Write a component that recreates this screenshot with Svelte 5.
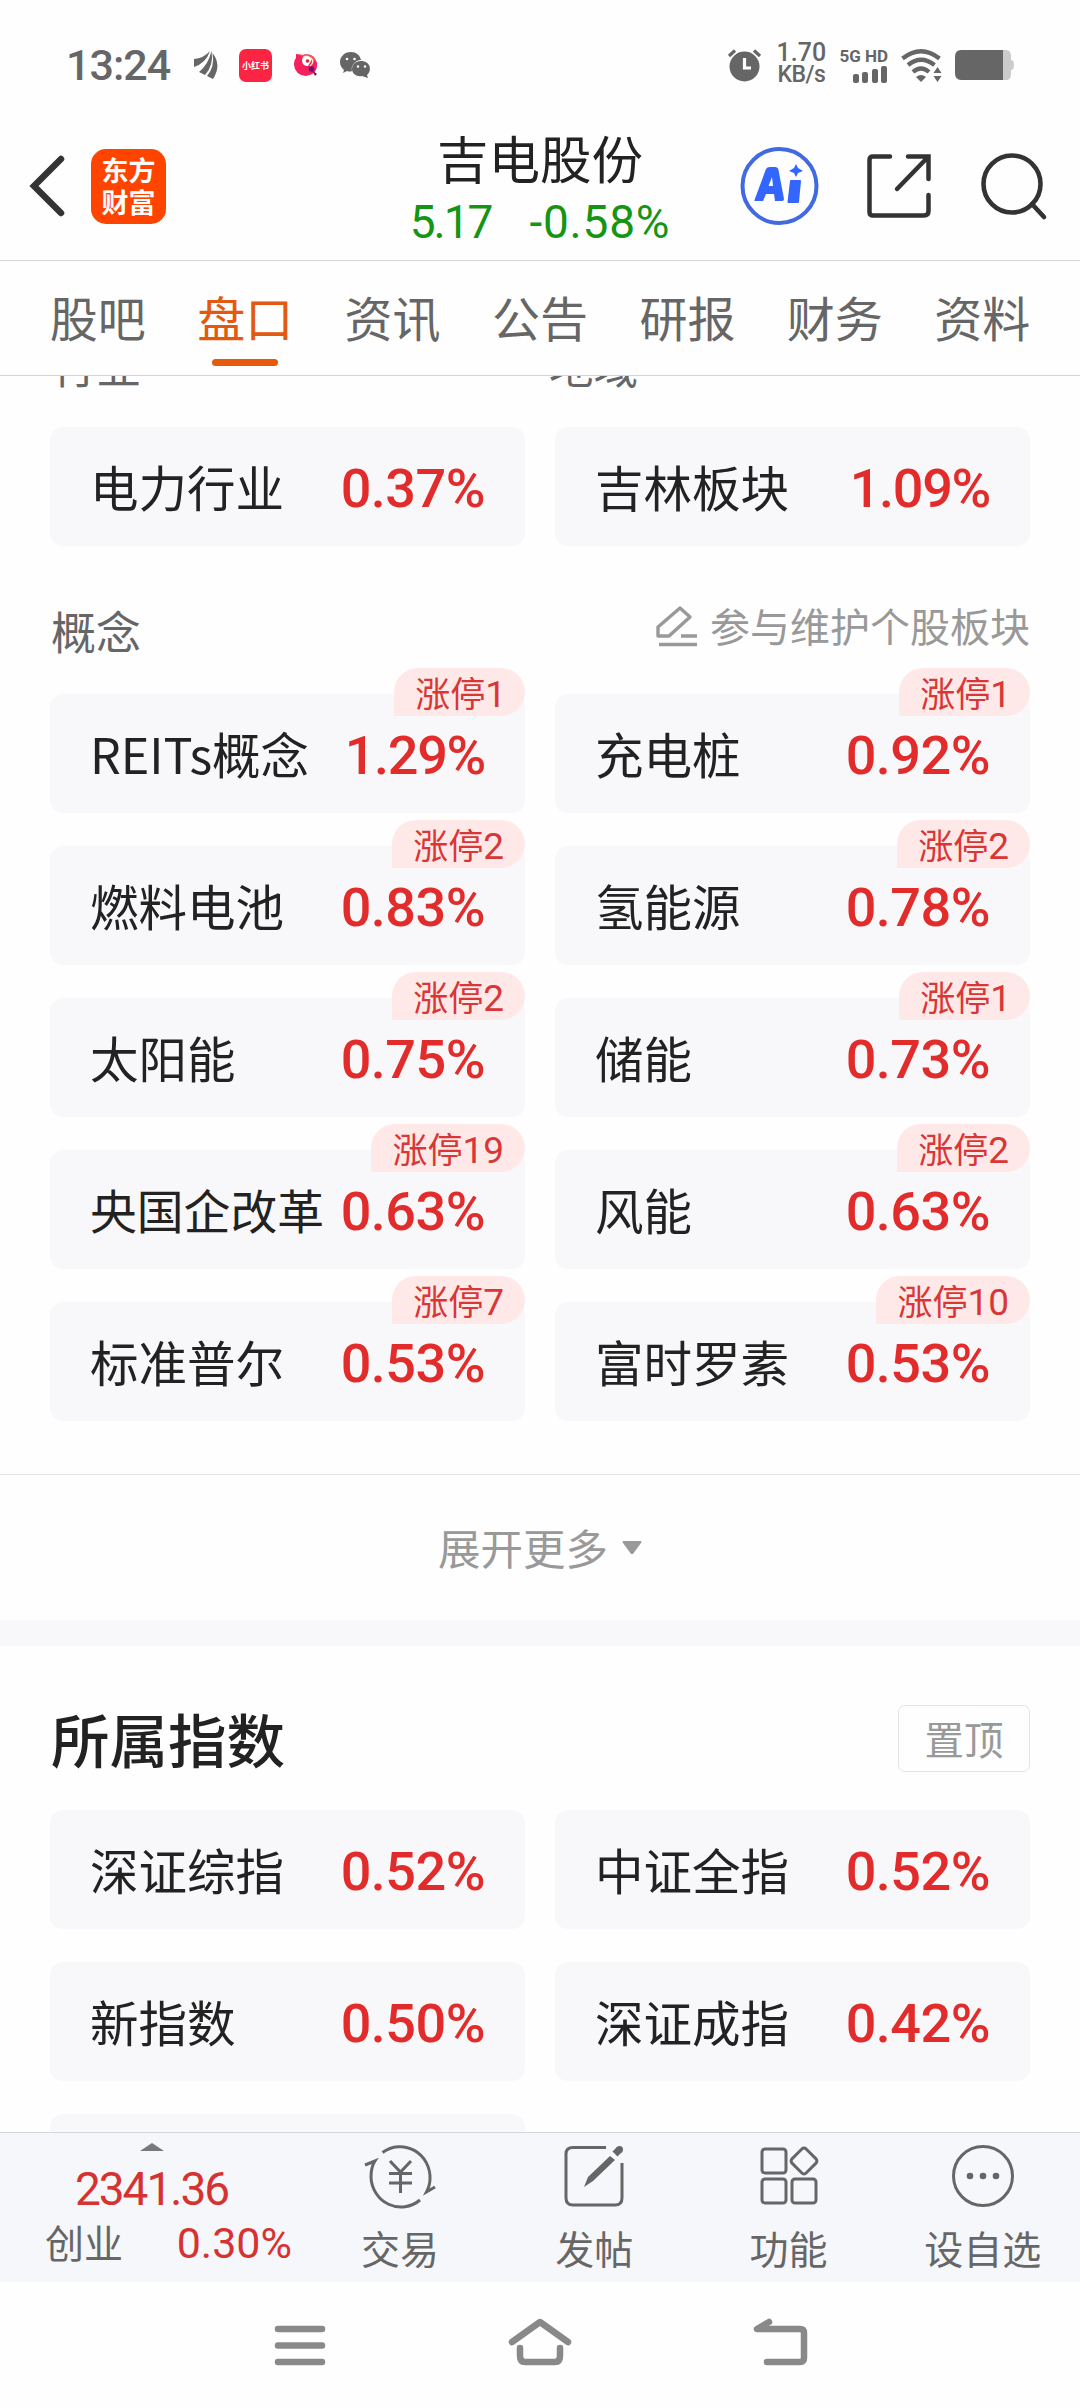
<script lang="ts">
    type Item = { name: string; change: string; limit?: number };

    const tabs = ['股吧', '盘口', '资讯', '公告', '研报', '财务', '资料'];
    let active = '盘口';

    const top: Item[] = [
        { name: '电力行业', change: '0.37%' },
        { name: '吉林板块', change: '1.09%' },
    ];
    const concepts: Item[] = [
        { name: 'REITs概念', change: '1.29%', limit: 1 },
        { name: '充电桩', change: '0.92%', limit: 1 },
        { name: '燃料电池', change: '0.83%', limit: 2 },
        { name: '氢能源', change: '0.78%', limit: 2 },
        { name: '太阳能', change: '0.75%', limit: 2 },
        { name: '储能', change: '0.73%', limit: 1 },
        { name: '央国企改革', change: '0.63%', limit: 19 },
        { name: '风能', change: '0.63%', limit: 2 },
        { name: '标准普尔', change: '0.53%', limit: 7 },
        { name: '富时罗素', change: '0.53%', limit: 10 },
    ];
    const indexes: Item[] = [
        { name: '深证综指', change: '0.52%' },
        { name: '中证全指', change: '0.52%' },
        { name: '新指数', change: '0.50%' },
        { name: '深证成指', change: '0.42%' },
        { name: '', change: '' },
    ];
</script>

{#snippet cards(items: Item[])}
    <div class="cards">
        {#each items as item}
            <div class="card">
                <span class="name" class:long={item.name.length === 5}>{item.name}</span>
                <span class="change" class:one={item.change[0] === '1'}>{item.change}</span>
                {#if item.limit}
                    <span class="badge">涨停<b class:one={item.limit === 1}>{item.limit}</b></span>
                {/if}
            </div>
        {/each}
    </div>
{/snippet}

<div class="screen">
    <div class="status">
        <span class="time">13:24</span>
        <svg class="paper" width="24" height="28" viewBox="0 0 24 28" fill="#666">
            <path d="M0 8Q10 7 16 0Q12 12 0 16Z" />
            <path d="M5 21Q14 14 17.500 0Q20 14 11 24Z" />
            <path d="M13 25Q21 16 18.500 2Q28 14 19 28Z" />
        </svg>
        <span class="xhs">小红书</span>
        <svg class="bird" width="24" height="24" viewBox="0 0 24 24">
            <path d="M2 1L8 2Q20-1 23 10Q24 21 12 23Q1 22 0 12Q0 7 2 5Z" fill="#f5205c" />
            <path d="M3 1L9 2Q18 0 22 8L12 5Z" fill="#e8663b" />
            <path d="M8 7Q9 2 14 3Q18 4 17 8L14 13Q8 13 8 7Z" fill="#fff" />
            <circle cx="13.500" cy="8" r="1.800" fill="#d3263d" />
            <path d="M17 5Q21 9 16 13" fill="none" stroke="#ffe0d8" stroke-width="1.500" />
            <circle cx="17.500" cy="16" r="2.800" fill="#70136b" />
            <path d="M18 17L23 21L21 23Z" fill="#70136b" />
        </svg>
        <svg class="wechat" width="31" height="27" viewBox="0 0 31 27">
            <path d="M11 0C4 0 0 5 0 10C0 14 2 16 4 18L3 21L7 19Q10 20 12 19A10 9 0 0 1 21 8C20 3 16 0 11 0Z" fill="#666" />
            <path d="M21 9C15 9 12 13 12 17C12 22 17 25 22 24L28 26L27 23C32 19 31 9 21 9Z" fill="#666" />
            <g fill="#fff">
                <circle cx="7" cy="7" r="1.3" /><circle cx="14.5" cy="7" r="1.3" />
                <circle cx="18" cy="14.5" r="1.2" /><circle cx="25" cy="14.5" r="1.2" />
            </g>
        </svg>
        <div class="spacer"></div>
        <svg class="alarm" width="33" height="33" viewBox="0 0 33 33">
            <circle cx="16.5" cy="17.5" r="15" fill="#666" />
            <path d="M1 7L7 1.5M32 7L26 1.5" stroke="#666" stroke-width="3.2" />
            <path d="M16.500 9V19H23" fill="none" stroke="#fff" stroke-width="3.2" />
        </svg>
        <div class="speed"><span>1.70</span><span class="unit">KB/s</span></div>
        <div class="signal">
            <span>5G HD</span>
            <svg width="36" height="17" viewBox="0 0 36 17" fill="#666">
                <rect x="1" y="8" width="6" height="9" rx="2" />
                <rect x="10" y="6" width="6" height="11" rx="2" />
                <rect x="20" y="3" width="6" height="14" rx="2" />
                <rect x="29" y="0" width="6" height="17" rx="2" />
            </svg>
        </div>
        <svg class="wifi" width="41" height="33" viewBox="0 0 41 33">
            <g fill="none" stroke="#666" stroke-width="4.2">
                <path d="M1.5 9.5Q20-5 38.500 9.500" />
                <path d="M7 16Q20 5.500 33.500 16" />
                <path d="M12 23Q20 16 28 23" />
            </g>
            <path d="M15 28Q20 24 25 28L20 33Z" fill="#666" />
            <path d="M32.500 24L36.500 18L40.500 24ZM32.500 27L36.500 33L40.500 27Z" fill="#666" />
        </svg>
        <svg class="battery" width="59" height="30" viewBox="0 0 59 30">
            <path d="M48 0H51Q56 0 56 6V10Q59 10 59 15T56 20V24Q56 30 51 30H48Z" fill="#ccc" />
            <path d="M48 0V30H6Q0 30 0 23V7Q0 0 6 0Z" fill="#666" />
        </svg>
    </div>

    <header>
        <svg class="back" width="36" height="62" viewBox="0 0 36 62">
            <path d="M32 4L5 31L32 58" fill="none" stroke="#333" stroke-width="6.500" stroke-linecap="round" />
        </svg>
        <div class="logo"><span>东方</span><span>财富</span></div>
        <div class="stock">
            <h1>吉电股份</h1>
            <p><span class="price">5.17</span><span class="rate">-0.58%</span></p>
        </div>
        <svg class="ai" width="80" height="80" viewBox="0 0 80 80">
            <circle cx="39.500" cy="40" r="37" fill="none" stroke="#4169e1" stroke-width="4" />
            <path d="M14.500 54L26 23Q27 21 30 21H35Q38 21 38.500 24L44 53Q44 55 42 55H35L34 48H26L23 55H15.500Q14 55 14.500 54ZM28.500 40H33L32 31Z" fill="#36f" />
            <path d="M51 35H60L58 56H48.500Z" fill="#36f" stroke="#36f" stroke-width="2" stroke-linejoin="round" />
            <path d="M56 18L58 22L63 25L58 27L56 31L54 27L49 25L54 22Z" fill="#36f" />
        </svg>
        <svg class="share" width="66" height="66" viewBox="0 0 66 66">
            <path d="M24 3.500H7Q3.500 3.500 3.500 7V59Q3.500 62.500 7 62.500H58Q62.500 62.500 62.500 58V42M42 3.500H62.500V26M62 4L31 36" fill="none" stroke="#333" stroke-width="4.500" stroke-linecap="round" />
        </svg>
        <svg class="search" width="66" height="67" viewBox="0 0 66 67">
            <circle cx="31" cy="31" r="28.500" fill="none" stroke="#333" stroke-width="4.600" />
            <path d="M51 51L63 64" stroke="#333" stroke-width="4.600" stroke-linecap="round" />
        </svg>
    </header>

    <nav class="tabs">
        {#each tabs as tab}
            <button class:active={tab === active} on:click={() => (active = tab)}>{tab}</button>
        {/each}
    </nav>

    <main>
        <div class="labels"><span>行业</span><span>地域</span></div>
        {@render cards(top)}

        <div class="concept-head">
            <span>概念</span>
            <div class="maintain">
                <svg width="42" height="42" viewBox="0 0 42 42" fill="none" stroke="#999" stroke-width="3.400" stroke-linejoin="round">
                    <path d="M2 31V22L24 3L34 12L13 31Z" />
                    <path d="M25 31H41M3 39.500H41" />
                </svg>
                参与维护个股板块
            </div>
        </div>
        {@render cards(concepts)}

        <div class="more">
            展开更多
            <svg width="20" height="14" viewBox="0 0 20 14"><path d="M1 0H19Q20 1 19 2L11 13H9L1 2Q0 1 1 0Z" fill="#999" /></svg>
        </div>

        <div class="index-head">
            <h2>所属指数</h2>
            <button>置顶</button>
        </div>
        {@render cards(indexes)}
    </main>

    <footer>
        <div class="quote">
            <svg width="24" height="8" viewBox="0 0 24 8"><path d="M0 8L12 0L24 8Z" fill="#77787b" /></svg>
            <span class="red point">2341.36</span>
            <div><span>创业</span><span class="red">0.30%</span></div>
        </div>
        <div class="action">
            <svg width="72" height="66" viewBox="0 0 72 66" fill="none" stroke="#666" stroke-width="3">
                <path d="M18.500 9.500A30 31 0 0 1 66 36Q66 42 62.500 49L71 44M1 22L11 18Q7 24 7 34A30 31 0 0 0 56 57" />
                <path d="M26 18L36.500 29L47 18M25 30.500H48M25 40H48M36.500 28V50" />
            </svg>
            <span>交易</span>
        </div>
        <div class="action">
            <svg width="60" height="66" viewBox="0 0 60 66" fill="none" stroke="#666" stroke-width="3">
                <path d="M42 4.500H9Q2 4.500 2 11V55Q2 62 9 62H51Q58 62 58 55V20" />
                <path d="M51 11L55.500 6.500" stroke-width="7" />
                <path d="M55.500 6.500h.01" stroke-width="7" stroke-linecap="round" />
                <path d="M20 44L24 34L46 13L51 17L29 38Z" fill="#666" stroke="none" />
            </svg>
            <span>发帖</span>
        </div>
        <div class="action">
            <svg width="60" height="66" viewBox="0 0 60 66" fill="none" stroke="#666" stroke-width="3">
                <rect x="3" y="6" width="24" height="24" rx="3" />
                <rect x="3" y="36" width="24" height="24" rx="3" />
                <rect x="33" y="36" width="24" height="24" rx="3" />
                <rect x="35" y="8" width="20" height="20" rx="3" transform="rotate(45 45 18)" />
            </svg>
            <span>功能</span>
        </div>
        <div class="action">
            <svg width="64" height="66" viewBox="0 0 64 66">
                <circle cx="32" cy="33" r="29.500" fill="none" stroke="#666" stroke-width="3" />
                <g fill="#666"><circle cx="19" cy="33" r="3.300" /><circle cx="32" cy="33" r="3.300" /><circle cx="45" cy="33" r="3.300" /></g>
            </svg>
            <span>设自选</span>
        </div>
    </footer>

    <div class="system">
        <svg width="50" height="52" viewBox="0 0 50 52"><path d="M3 9H47M3 25.500H47M3 42H47" /></svg>
        <svg width="64" height="52" viewBox="0 0 64 52"><path d="M4 22L32 2L60 22M12 28V36Q12 42 17 42H47Q52 42 52 36V28" /></svg>
        <svg width="54" height="52" viewBox="0 0 54 52"><path d="M15 2L3 9H46Q50 9 50 13V38Q50 42 46 42H13" /></svg>
    </div>
</div>

<style>
    :global(body) {
        margin: 0;
        background: #fefefe;
    }
    .screen {
        width: 1080px;
        height: 2408px;
        display: flex;
        flex-direction: column;
        overflow: hidden;
        background: #fefefe;
        color: #222;
        font-family: 'Noto Sans CJK SC', sans-serif;
        line-height: 1;
    }
    svg {
        display: block;
        flex: none;
        overflow: visible;
    }
    h1, h2, p {
        margin: 0;
        font-weight: 400;
    }
    button {
        margin: 0;
        padding: 0;
        border: 0;
        background: none;
        font: inherit;
        color: inherit;
    }

    .status {
        height: 128px;
        flex: none;
        display: flex;
        align-items: center;
        padding: 2px 66px 0;
        box-sizing: border-box;
        color: #666;
    }
    .time {
        width: 128px;
        font: 500 43px/1 Roboto, sans-serif;
        letter-spacing: -1px;
    }
    .xhs {
        width: 33px;
        height: 33px;
        margin: 0 22px 0 21px;
        border-radius: 7px;
        background: #fb2442;
        color: #fff;
        font-size: 9px;
        font-weight: 700;
        line-height: 33px;
        text-align: center;
    }
    .wechat {
        margin-left: 22px;
    }
    .spacer {
        flex: 1;
    }
    .speed {
        width: 50px;
        margin: -2px 0 0 15px;
        display: flex;
        flex-direction: column;
        align-items: center;
        font: 500 25px/22px Roboto, sans-serif;
    }
    .unit {
        font-size: 23px;
        letter-spacing: -0.5px;
    }
    .signal {
        margin-left: 13px;
        display: flex;
        flex-direction: column;
        align-items: flex-end;
        gap: 2px;
        font: 700 17px/16px Roboto, sans-serif;
        white-space: nowrap;
    }
    .wifi {
        margin-left: 13px;
    }
    .battery {
        margin-left: 13px;
    }

    header {
        height: 132px;
        flex: none;
        display: flex;
        align-items: center;
        padding: 0 33px 16px 29px;
        box-sizing: border-box;
    }
    .logo {
        width: 75px;
        height: 75px;
        margin-left: 26px;
        display: flex;
        flex-direction: column;
        justify-content: center;
        align-items: center;
        border-radius: 15px;
        background: #ff4400;
        color: #fff;
        font-size: 27px;
        font-weight: 700;
        line-height: 32px;
    }
    .stock {
        width: 300px;
        margin: 4px 0 0 224px;
        text-align: center;
    }
    h1 {
        font-size: 51.5px;
        line-height: 60px;
    }
    .stock p {
        display: flex;
        justify-content: center;
        gap: 38px;
        margin-top: 7px;
        color: #149514;
        font: 400 46px/56px Roboto, sans-serif;
    }
    .price {
        letter-spacing: -2px;
    }
    .rate {
        letter-spacing: 0.8px;
    }
    .ai {
        margin-left: 50px;
    }
    .share {
        margin-left: 46px;
    }
    .search {
        margin-left: auto;
    }

    .tabs {
        height: 116px;
        flex: none;
        display: flex;
        padding: 0 24px;
        box-sizing: border-box;
        border-top: 1px solid #d4d4d4;
        border-bottom: 1px solid #d4d4d4;
    }
    .tabs button {
        flex: 1;
        position: relative;
        padding-bottom: 3px;
        color: #666;
        font-size: 48px;
        line-height: 111px;
    }
    .tabs .active {
        color: #e25a10;
    }
    .tabs .active::after {
        content: '';
        position: absolute;
        left: 50%;
        bottom: 9px;
        width: 66px;
        height: 7px;
        margin-left: -33px;
        border-radius: 4px;
        background: #e65a0c;
    }

    main {
        height: 1756px;
        flex: none;
        overflow: hidden;
    }
    .labels {
        display: grid;
        grid-template-columns: 497px 1fr;
        height: 84px;
        margin: -33px 0 0;
        padding-left: 52px;
        color: #666;
        font-size: 44.5px;
    }
    .cards {
        display: grid;
        grid-template-columns: 475px 475px;
        gap: 33px 30px;
        padding: 0 50px;
    }
    .card {
        position: relative;
        height: 119px;
        display: flex;
        justify-content: space-between;
        align-items: center;
        padding: 0 40px;
        box-sizing: border-box;
        border-radius: 13px;
        background: #f8f8fa;
        white-space: nowrap;
    }
    .name {
        margin-top: -1px;
        font-size: 48.5px;
    }
    .name.long {
        font-size: 46.8px;
    }
    .change {
        padding-top: 5px;
        color: #e22b2b;
        font: 500 54px/1 Roboto, sans-serif;
        letter-spacing: -0.5px;
    }
    .change.one {
        letter-spacing: -1.3px;
    }
    .badge {
        position: absolute;
        top: -26px;
        right: 0;
        height: 48px;
        padding: 0 21px;
        border-radius: 24px 24px 24px 0;
        background: #fee9e8;
        color: #d93636;
        font-size: 35px;
        line-height: 48px;
    }
    .badge b {
        font: 400 37px/1 Roboto, sans-serif;
    }
    .badge b.one {
        letter-spacing: -2px;
    }
    .concept-head {
        height: 148px;
        display: flex;
        justify-content: space-between;
        padding: 0 50px 0 51px;
        color: #666;
        font-size: 45px;
        line-height: 169px;
    }
    .maintain {
        display: flex;
        align-items: center;
        gap: 12px;
        height: 159px;
        color: #999;
        font-size: 40px;
        line-height: 157px;
    }
    .more {
        height: 145px;
        display: flex;
        justify-content: center;
        align-items: center;
        gap: 14px;
        margin-top: 53px;
        border-top: 1px solid #e4e4e4;
        border-bottom: 26px solid #f8f8fa;
        color: #999;
        font-size: 42.5px;
    }
    .index-head {
        height: 164px;
        display: flex;
        justify-content: space-between;
        align-items: center;
        padding: 20px 50px 0 51px;
        box-sizing: border-box;
    }
    h2 {
        font-size: 58.5px;
        font-weight: 500;
    }
    .index-head button {
        width: 132px;
        height: 67px;
        border: 1.5px solid #e4e4e4;
        border-radius: 7px;
        color: #999;
        font-size: 39.5px;
    }

    footer {
        height: 150px;
        flex: none;
        display: flex;
        box-sizing: border-box;
        border-top: 1px solid #d4d5d8;
        background: #f6f7fa;
        color: #666;
        font-size: 39px;
    }
    .quote {
        width: 303px;
        display: flex;
        flex-direction: column;
        align-items: center;
        padding-top: 10px;
    }
    .red {
        color: #d63232;
        font-family: Roboto, sans-serif;
    }
    .point {
        margin-top: 13px;
        font-size: 46px;
        line-height: 50px;
        letter-spacing: -2px;
    }
    .quote div {
        align-self: stretch;
        display: flex;
        justify-content: space-between;
        align-items: center;
        height: 54px;
        padding: 0 11px 0 45px;
    }
    .quote div .red {
        padding-top: 4px;
        font-size: 43px;
    }
    .action {
        flex: 1;
        display: flex;
        flex-direction: column;
        align-items: center;
        padding-top: 10px;
    }
    .action span {
        margin-top: 19px;
    }

    .system {
        flex: 1;
        display: flex;
        justify-content: space-between;
        padding: 38px 272px 0 275px;
    }
    .system path {
        fill: none;
        stroke: #898989;
        stroke-width: 6.500;
        stroke-linecap: round;
        stroke-linejoin: round;
    }
</style>
